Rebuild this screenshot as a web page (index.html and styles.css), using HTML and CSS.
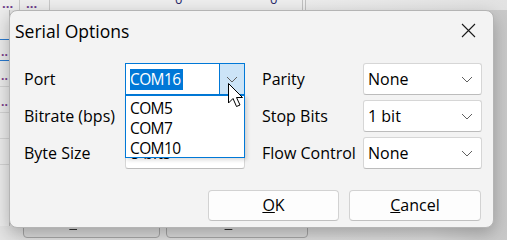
FILE: index.html
```html
<!DOCTYPE html>
<html lang="en">
<head>
    <meta charset="UTF-8">
    <meta name="viewport" content="width=device-width, initial-scale=1.0">
    <title>Serial Options</title>
    <link rel="stylesheet" href="styles.css">
</head>
<body>
    <div class="screen">
        <div class="app">
            <div class="app-head">
                <div class="hcell w20">...</div>
                <div class="hcell w30">...</div>
                <div class="hcell w255"><span class="zero z1">0</span><span class="zero z2">0</span></div>
                <div class="hcell rest"></div>
            </div>
            <div class="app-body">
                <div class="side">
                    <div class="srow first"></div>
                    <div class="srow sel">..</div>
                    <div class="srow">..</div>
                    <div class="srow">..</div>
                    <div class="srow"></div>
                    <div class="srow"></div>
                </div>
            </div>
            <div class="app-foot">
                <div class="app-btn b1"><u>S</u>earch</div>
                <div class="app-btn b2"><u>E</u>dit</div>
            </div>
        </div>

        <div class="dialog">
            <div class="titlebar">
                <span class="title">Serial Options</span>
                <div class="close">
                    <svg width="15" height="15" viewBox="0 0 15 15"><path d="M1 1 L14 14 M14 1 L1 14" stroke="#1a1a1a" stroke-width="1.1" fill="none"/></svg>
                </div>
            </div>

            <div class="form">
                <div class="lbl">Port</div>
                <div class="combo focus">
                    <span class="value"><span class="selected">COM16</span></span>
                    <span class="drop-btn">
                        <svg width="12" height="7" viewBox="0 0 12 7"><path d="M1 1 L6 6 L11 1" stroke="#606060" stroke-width="1" fill="none"/></svg>
                    </span>
                    <div class="droplist">
                        <div class="item">COM5</div>
                        <div class="item">COM7</div>
                        <div class="item">COM10</div>
                    </div>
                    <svg class="pointer" width="17" height="26" viewBox="0 0 17 26"><path d="M0.5 0.5 L0.5 20 L5 15.5 L8.5 23.5 L12 22 L8.5 14.5 L14.5 14.5 Z" fill="#fff" stroke="#000" stroke-width="1"/></svg>
                </div>
                <div class="lbl lbl-r">Parity</div>
                <div class="combo">
                    <span class="value">None</span>
                    <svg class="chev" width="12" height="7" viewBox="0 0 12 7"><path d="M1 1 L6 6 L11 1" stroke="#606060" stroke-width="1" fill="none"/></svg>
                </div>

                <div class="lbl">Bitrate (bps)</div>
                <div class="combo">
                    <span class="value">9600</span>
                    <svg class="chev" width="12" height="7" viewBox="0 0 12 7"><path d="M1 1 L6 6 L11 1" stroke="#606060" stroke-width="1" fill="none"/></svg>
                </div>
                <div class="lbl lbl-r">Stop Bits</div>
                <div class="combo">
                    <span class="value">1 bit</span>
                    <svg class="chev" width="12" height="7" viewBox="0 0 12 7"><path d="M1 1 L6 6 L11 1" stroke="#606060" stroke-width="1" fill="none"/></svg>
                </div>

                <div class="lbl">Byte Size</div>
                <div class="combo">
                    <span class="value">8 bits</span>
                    <svg class="chev" width="12" height="7" viewBox="0 0 12 7"><path d="M1 1 L6 6 L11 1" stroke="#606060" stroke-width="1" fill="none"/></svg>
                </div>
                <div class="lbl lbl-r">Flow Control</div>
                <div class="combo">
                    <span class="value">None</span>
                    <svg class="chev" width="12" height="7" viewBox="0 0 12 7"><path d="M1 1 L6 6 L11 1" stroke="#606060" stroke-width="1" fill="none"/></svg>
                </div>
            </div>

            <div class="buttons">
                <div class="button ok"><u>O</u>K</div>
                <div class="button cancel"><u>C</u>ancel</div>
            </div>
        </div>
    </div>
</body>
</html>
```

FILE: styles.css
```css
body {
    margin: 0;
    padding: 0;
    font-family: "Open Sans", "Noto Sans", sans-serif;
    color: #000;
    background-color: #d9d9d9;
}
.screen {
    position: relative;
    width: 507px;
    height: 240px;
    overflow: hidden;
    background: linear-gradient(to right, #e4e4e4 0%, #dcdcdc 85%, #c9c9c9 100%);
}

/* application window behind the dialog */
.app {
    display: flex;
    flex-direction: column;
    height: 240px;
}
.app-head {
    display: flex;
    height: 10px;
    overflow: hidden;
    background-color: #eeeeee;
    font-size: 13px;
    color: #3a2a6a;
}
.hcell {
    height: 10px;
    line-height: 6px;
    border-right: 1px solid #c8c8c8;
    box-sizing: border-box;
    font-weight: bold;
    color: #6b3a8a;
    padding-left: 2px;
}
.w20 { width: 20px; }
.w30 { width: 30px; padding-left: 6px; }
.w255 {
    width: 256px;
    position: relative;
    border-right: 4px double #c0c0c0;
}
.rest {
    flex: 1;
    border: none;
    background: linear-gradient(to right, #ececec, #e2e2e2);
}
.zero {
    position: absolute;
    top: -4px;
    font-weight: normal;
    color: #2a2a6a;
}
.z1 { left: 125px; }
.z2 { left: 220px; }
.app-body {
    flex: 1;
    display: flex;
}
.side {
    width: 9px;
    border-right: 1px solid #b8b8b8;
    background-color: #ececec;
}
.srow {
    height: 26px;
    box-sizing: border-box;
    border-bottom: 1px solid #d4d4d4;
    font-size: 12px;
    line-height: 30px;
    color: #7a3a8a;
    font-weight: bold;
    padding-left: 1px;
}
.srow.first {
    height: 30px;
    border-bottom: 1px solid #2b7bd0;
}
.srow.sel {
    height: 21px;
    border-bottom: 1px solid #2b7bd0;
    line-height: 24px;
}
.app-foot {
    display: flex;
    gap: 6px;
    height: 12px;
    padding: 0 0 2px 23px;
    align-items: flex-end;
}
.app-btn {
    height: 22px;
    box-sizing: border-box;
    border: 1px solid #a8a8a8;
    border-radius: 4px;
    background-color: #dedede;
    font-size: 14px;
    line-height: 12px;
    text-align: center;
    color: #333;
}
.b1 { width: 137px; }
.b2 { width: 142px; }

/* dialog */
.dialog {
    position: absolute;
    left: 9px;
    top: 10px;
    width: 485px;
    height: 218px;
    box-sizing: border-box;
    border: 1px solid #b4b4b4;
    border-radius: 8px;
    background-color: #f3f3f3;
    box-shadow: 0 6px 18px rgba(0, 0, 0, 0.28);
}
.titlebar {
    display: flex;
    align-items: center;
    height: 38px;
    padding-left: 5px;
}
.title {
    font-size: 17.5px;
    padding-top: 2px;
}
.close {
    margin-left: auto;
    margin-right: 4px;
    width: 42px;
    height: 34px;
    display: flex;
    align-items: center;
    justify-content: center;
}
.form {
    display: grid;
    grid-template-columns: 101px 120px 118px 119px;
    grid-auto-rows: 32px;
    row-gap: 5px;
    padding: 14px 0 0 14px;
    font-size: 16px;
}
.lbl {
    display: flex;
    align-items: center;
    white-space: nowrap;
}
.lbl-r {
    padding-left: 17px;
}
.combo {
    position: relative;
    display: flex;
    align-items: center;
    box-sizing: border-box;
    background-color: #fff;
    border: 1px solid #d6d6d6;
    border-bottom-color: #bcbcbc;
    border-radius: 3px;
}
.value {
    flex: 1;
    padding-left: 4px;
    font-size: 16px;
}
.chev {
    margin-right: 8px;
}
.combo.focus {
    border: 1px solid #0078d7;
    border-radius: 0;
    align-items: stretch;
}
.combo.focus .value {
    display: flex;
    align-items: center;
    padding-left: 4px;
}
.selected {
    background-color: #0078d7;
    color: #fff;
    height: 21px;
    line-height: 21px;
    padding-right: 2px;
    font-size: 15.5px;
    letter-spacing: -0.6px;
}
.drop-btn {
    width: 24px;
    display: flex;
    align-items: center;
    justify-content: center;
    background-color: #cce4f7;
    border-left: 1px solid #0078d7;
}
.droplist {
    position: absolute;
    left: -1px;
    top: 31px;
    width: 120px;
    height: 63px;
    box-sizing: border-box;
    border: 1px solid #0078d7;
    background-color: #fff;
    padding-top: 2px;
    box-shadow: 2px 2px 4px rgba(0, 0, 0, 0.15);
    z-index: 2;
}
.item {
    height: 20px;
    line-height: 21px;
    padding-left: 4px;
    font-size: 15.5px;
    letter-spacing: -0.6px;
}
.pointer {
    position: absolute;
    left: 102px;
    top: 19px;
    z-index: 3;
}
.buttons {
    display: flex;
    justify-content: flex-end;
    gap: 10px;
    padding: 21px 12px 0 0;
}
.button {
    height: 31px;
    box-sizing: border-box;
    border: 1px solid #d2d2d2;
    border-bottom-color: #c0c0c0;
    border-radius: 4px;
    background-color: #fdfdfd;
    font-size: 16px;
    line-height: 29px;
    text-align: center;
}
.ok { width: 131px; }
.cancel { width: 132px; }
```
